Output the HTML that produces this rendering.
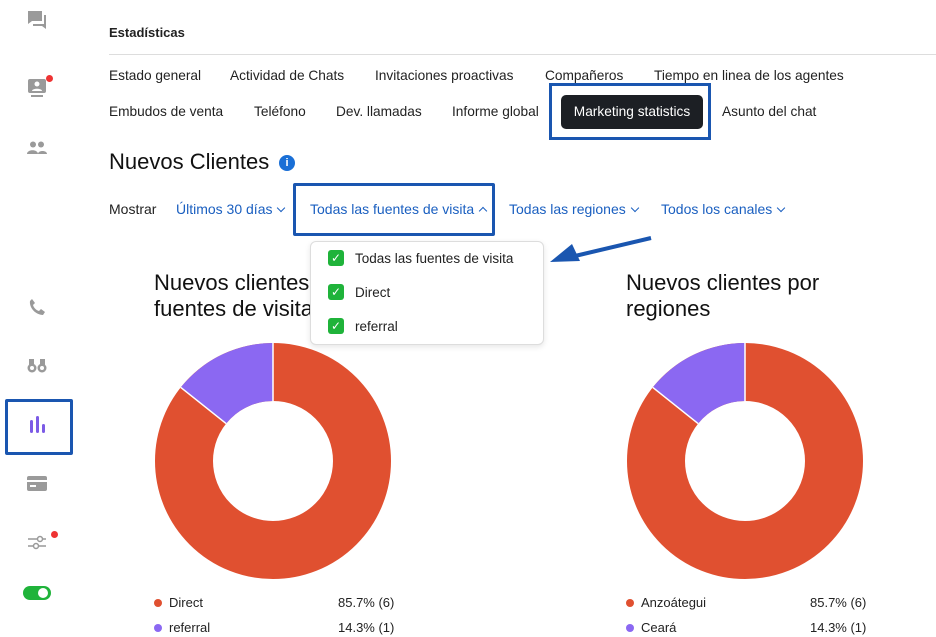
<!DOCTYPE html>
<html><head><meta charset="utf-8"><style>
body{margin:0;width:936px;height:637px;background:#fff;font-family:"Liberation Sans",sans-serif;color:#111;position:relative;overflow:hidden}
.a{position:absolute;white-space:nowrap}
.t{font-size:14px;color:#222}
.b{color:#1a5fc0;font-size:14px}
.ic{position:absolute;fill:#9a9a9a}
.cv{display:inline-block;width:5px;height:5px;border-right:1.5px solid #1a5fc0;border-bottom:1.5px solid #1a5fc0;transform:rotate(45deg);margin-left:6px;position:relative;top:-3px}
.cu{transform:rotate(-135deg);top:0}
</style></head><body>
<svg class="ic" style="left:26px;top:9px" width="22" height="22" viewBox="0 0 22 22"><path d="M2 2h14v10H6l-4 3z"/><path d="M18 6h2v14l-4-3H7v-2h11z"/></svg>
<svg class="ic" style="left:26px;top:76px" width="24" height="24" viewBox="0 0 24 24"><rect x="2" y="3" width="18" height="14" rx="2"/><circle cx="11" cy="8" r="2.5" fill="#fff"/><path d="M6 15c0-3 10-3 10 0z" fill="#fff"/><rect x="5" y="19" width="12" height="2"/></svg>
<div class="a" style="left:46px;top:75px;width:7px;height:7px;border-radius:50%;background:#e33"></div>
<svg class="ic" style="left:27px;top:141px" width="20" height="14" viewBox="0 0 20 14"><circle cx="6" cy="3.5" r="3"/><circle cx="14" cy="3.5" r="3"/><path d="M0 13c0-5 11-5 11 0zM11 13c0-4 9-4 9 0z"/></svg>
<svg class="ic" style="left:29px;top:298px" width="16" height="18" viewBox="0 0 16 18"><path d="M3 1l3 4-2 2c1 3 3 5 6 6l2-2 4 3-2 3C7 17 0 10 1 3z"/></svg>
<svg class="ic" style="left:27px;top:357px" width="20" height="16" viewBox="0 0 20 16"><circle cx="5" cy="11" r="4.5"/><circle cx="15" cy="11" r="4.5"/><rect x="2" y="2" width="5" height="8"/><rect x="13" y="2" width="5" height="8"/><circle cx="5" cy="11" r="2" fill="#fff"/><circle cx="15" cy="11" r="2" fill="#fff"/></svg>
<div class="a" style="left:5px;top:399px;width:62px;height:50px;border:3px solid #1a56b0;border-radius:2px;background:#fff"></div>
<div class="a" style="left:30px;top:420px;width:3px;height:13px;background:#7c5be6;border-radius:2px"></div>
<div class="a" style="left:36px;top:416px;width:3px;height:17px;background:#7c5be6;border-radius:2px"></div>
<div class="a" style="left:42px;top:424px;width:3px;height:9px;background:#7c5be6;border-radius:2px"></div>
<svg class="ic" style="left:27px;top:476px" width="20" height="15" viewBox="0 0 20 15"><rect x="0" y="0" width="20" height="15" rx="2"/><rect x="0" y="4" width="20" height="2" fill="#fff"/><rect x="3" y="9" width="6" height="2" fill="#fff"/></svg>
<svg style="position:absolute;left:28px;top:534px" width="20" height="16" viewBox="0 0 20 16" stroke="#999" stroke-width="1.5" fill="#fff"><path d="M0 5h18M0 12h18"/><circle cx="12" cy="5" r="2.5"/><circle cx="8" cy="12" r="2.5"/></svg>
<div class="a" style="left:51px;top:531px;width:7px;height:7px;border-radius:50%;background:#e33"></div>
<div class="a" style="left:23px;top:586px;width:28px;height:14px;border-radius:7px;background:#1fb33a"></div>
<div class="a" style="left:38px;top:588px;width:10px;height:10px;border-radius:50%;background:#fff"></div>

<div class="a" style="left:109px;top:25px;font-size:13px;font-weight:bold;color:#222">Estadísticas</div>
<div class="a" style="left:109px;top:54px;width:827px;height:1px;background:#ddd"></div>
<div class="a t" style="left:109px;top:68px;font-size:13.7px">Estado general</div>
<div class="a t" style="left:230px;top:68px;font-size:13.7px">Actividad de Chats</div>
<div class="a t" style="left:375px;top:68px;font-size:13.7px">Invitaciones proactivas</div>
<div class="a t" style="left:545px;top:68px;font-size:13.7px">Compañeros</div>
<div class="a t" style="left:654px;top:68px;font-size:13.7px">Tiempo en linea de los agentes</div>
<div class="a t" style="left:109px;top:104px;font-size:13.7px">Embudos de venta</div>
<div class="a t" style="left:254px;top:104px;font-size:13.7px">Teléfono</div>
<div class="a t" style="left:336px;top:104px;font-size:13.7px">Dev. llamadas</div>
<div class="a t" style="left:452px;top:104px;font-size:13.7px">Informe global</div>
<div class="a" style="left:549px;top:83px;width:162px;height:57px;border:3px solid #1a56b0;box-sizing:border-box;background:#fff"></div>
<div class="a" style="left:561px;top:95px;width:142px;height:34px;background:#1c1f24;border-radius:5px;color:#fff;font-size:13.7px;line-height:34px;text-align:center">Marketing statistics</div>
<div class="a t" style="left:722px;top:104px;font-size:13.7px">Asunto del chat</div>

<div class="a" style="left:109px;top:149px;font-size:22px;color:#111">Nuevos Clientes</div>
<div class="a" style="left:279px;top:155px;width:16px;height:16px;border-radius:50%;background:#1a6fd6;color:#fff;font-size:11px;font-weight:bold;text-align:center;line-height:16px">i</div>

<div class="a t" style="left:109px;top:201px">Mostrar</div>
<div class="a b" style="left:176px;top:201px">Últimos 30 días<span class="cv"></span></div>
<div class="a" style="left:293px;top:183px;width:202px;height:53px;border:3px solid #1a56b0;box-sizing:border-box;border-radius:2px"></div>
<div class="a b" style="left:310px;top:201px">Todas las fuentes de visita<span class="cv cu"></span></div>
<div class="a b" style="left:509px;top:201px">Todas las regiones<span class="cv"></span></div>
<div class="a b" style="left:661px;top:201px">Todos los canales<span class="cv"></span></div>

<div class="a" style="left:154px;top:270px;font-size:22px;line-height:26px">Nuevos clientes<br>fuentes de visita</div>
<div class="a" style="left:626px;top:270px;font-size:22px;line-height:26px">Nuevos clientes por<br>regiones</div>

<svg style="position:absolute;left:0;top:0" width="936" height="637">
<g transform="translate(273,461)">
<circle r="89" fill="none" stroke="#e05030" stroke-width="58"/>
<path d="M0 -118A118 118 0 0 0 -92.2 -73.6L-46.9 -37.4A60 60 0 0 1 0 -60z" fill="#8b68f2"/>
<path d="M0 -118V-60M-92.2 -73.6L-46.9 -37.4" stroke="#fff" stroke-width="1.5"/>
</g>
<g transform="translate(745,461)">
<circle r="89" fill="none" stroke="#e05030" stroke-width="58"/>
<path d="M0 -118A118 118 0 0 0 -92.2 -73.6L-46.9 -37.4A60 60 0 0 1 0 -60z" fill="#8b68f2"/>
<path d="M0 -118V-60M-92.2 -73.6L-46.9 -37.4" stroke="#fff" stroke-width="1.5"/>
</g>
<path d="M651 238L575 256" stroke="#1a56b0" stroke-width="4"/>
<path d="M550 262l22-18 8 17z" fill="#1a56b0"/>
</svg>

<div class="a" style="left:310px;top:241px;width:232px;height:102px;background:#fff;border:1px solid #ddd;border-radius:6px;box-shadow:0 2px 6px rgba(0,0,0,.1)"></div>
<div class="a" style="left:328px;top:250px;width:16px;height:16px;background:#1fb33a;border-radius:3px;color:#fff;font-size:12px;text-align:center;line-height:16px">✓</div>
<div class="a t" style="left:355px;top:251px;font-size:13.5px">Todas las fuentes de visita</div>
<div class="a" style="left:328px;top:284px;width:16px;height:16px;background:#1fb33a;border-radius:3px;color:#fff;font-size:12px;text-align:center;line-height:16px">✓</div>
<div class="a t" style="left:355px;top:285px;font-size:13.5px">Direct</div>
<div class="a" style="left:328px;top:318px;width:16px;height:16px;background:#1fb33a;border-radius:3px;color:#fff;font-size:12px;text-align:center;line-height:16px">✓</div>
<div class="a t" style="left:355px;top:319px;font-size:13.5px">referral</div>

<div class="a" style="left:154px;top:599px;width:8px;height:8px;border-radius:50%;background:#e05030"></div>
<div class="a t" style="left:169px;top:595px;font-size:13px">Direct</div>
<div class="a t" style="left:338px;top:595px;font-size:13px">85.7% (6)</div>
<div class="a" style="left:154px;top:624px;width:8px;height:8px;border-radius:50%;background:#8b68f2"></div>
<div class="a t" style="left:169px;top:620px;font-size:13px">referral</div>
<div class="a t" style="left:338px;top:620px;font-size:13px">14.3% (1)</div>
<div class="a" style="left:626px;top:599px;width:8px;height:8px;border-radius:50%;background:#e05030"></div>
<div class="a t" style="left:641px;top:595px;font-size:13px">Anzoátegui</div>
<div class="a t" style="left:810px;top:595px;font-size:13px">85.7% (6)</div>
<div class="a" style="left:626px;top:624px;width:8px;height:8px;border-radius:50%;background:#8b68f2"></div>
<div class="a t" style="left:641px;top:620px;font-size:13px">Ceará</div>
<div class="a t" style="left:810px;top:620px;font-size:13px">14.3% (1)</div>
</body></html>
